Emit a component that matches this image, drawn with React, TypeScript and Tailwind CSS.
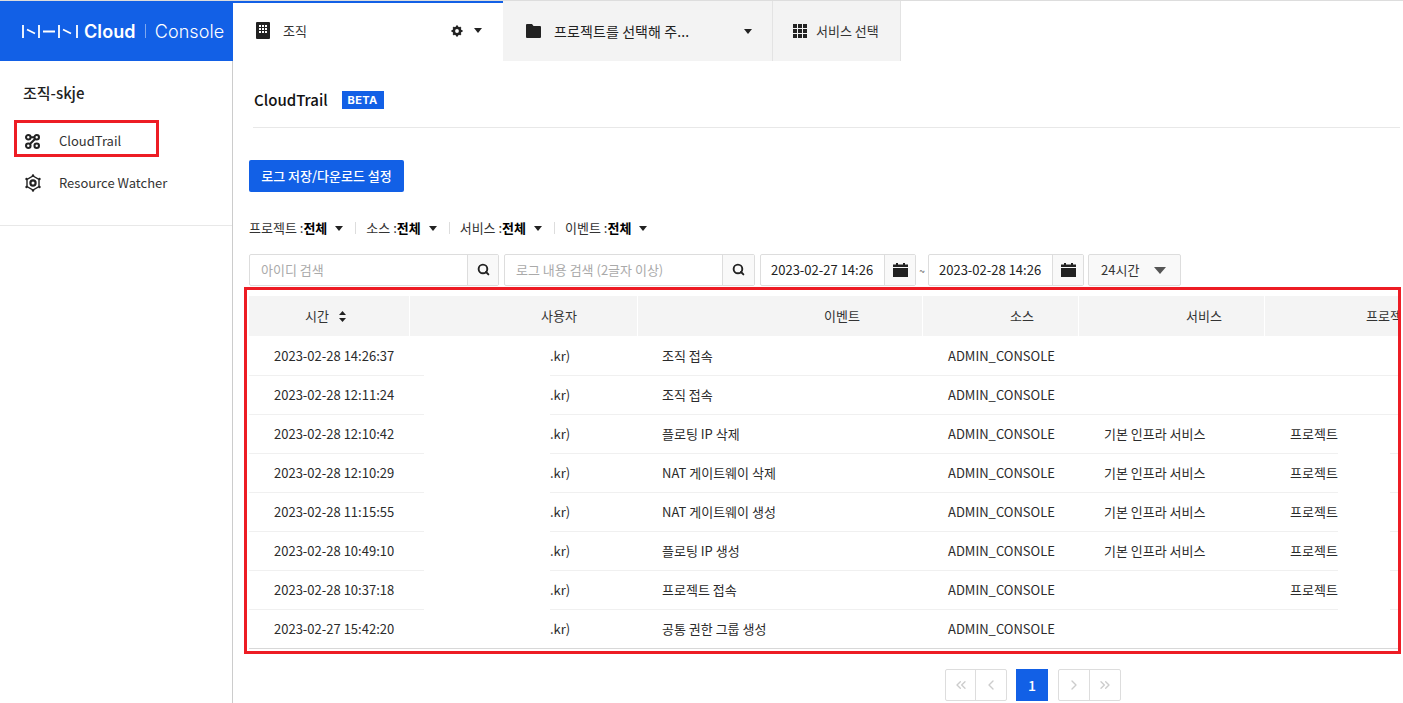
import { ChevronLeft, ChevronRight, ChevronsLeft, ChevronsRight, Search } from "lucide-react";

const FONT = "font-['Noto_Sans_CJK_KR','Noto_Sans',sans-serif]";

const rows = [
	{ time: "2023-02-28 14:26:37", event: "조직 접속", service: "", project: "" },
	{ time: "2023-02-28 12:11:24", event: "조직 접속", service: "", project: "" },
	{ time: "2023-02-28 12:10:42", event: "플로팅 IP 삭제", service: "기본 인프라 서비스", project: "프로젝트" },
	{ time: "2023-02-28 12:10:29", event: "NAT 게이트웨이 삭제", service: "기본 인프라 서비스", project: "프로젝트" },
	{ time: "2023-02-28 11:15:55", event: "NAT 게이트웨이 생성", service: "기본 인프라 서비스", project: "프로젝트" },
	{ time: "2023-02-28 10:49:10", event: "플로팅 IP 생성", service: "기본 인프라 서비스", project: "프로젝트" },
	{ time: "2023-02-28 10:37:18", event: "프로젝트 접속", service: "", project: "프로젝트" },
	{ time: "2023-02-27 15:42:20", event: "공통 권한 그룹 생성", service: "", project: "" },
];

const Caret = ({ className = "" }: { className?: string }) => (
	<span className={`inline-block w-0 h-0 border-x-[4px] border-x-transparent border-t-[5px] border-t-[#222] ${className}`} />
);

const GridIcon = ({ size = 14 }: { size?: number }) => (
	<svg width={size} height={size} viewBox="0 0 14 14" fill="#222">
		{[0, 5, 10].map((y) =>
			[0, 5, 10].map((x) => <rect key={`${x}-${y}`} x={x} y={y} width="4" height="4" />)
		)}
	</svg>
);

const OrgIcon = () => (
	<svg width="14" height="17" viewBox="0 0 14 17">
		<rect width="14" height="17" rx="1" fill="#222" />
		{[3, 6, 9].map((y) =>
			[3, 6, 9].map((x) => <rect key={`${x}-${y}`} x={x} y={y} width="2" height="2" fill="#fff" />)
		)}
	</svg>
);

const Logo = () => (
	<svg width="56" height="13" viewBox="0 0 56 13" fill="none" stroke="#fff" strokeWidth="1.8">
		<path d="M1 0v13M5 4.5l8 4M17 0v13M21 6.5h12M37 0v13M41 4.5l8 4M55 0v13" />
	</svg>
);

const TrailIcon = () => (
	<svg width="15" height="15" viewBox="0 0 16 16" fill="none" stroke="#222" strokeWidth="2.2">
		<circle cx="3.5" cy="3.5" r="2.4" />
		<circle cx="12.5" cy="3.5" r="2.4" />
		<circle cx="3.5" cy="12.5" r="2.4" />
		<circle cx="12.5" cy="12.5" r="2.4" />
		<path d="M6 3.5h4M5.5 10.5l5-5" />
	</svg>
);

const WatcherIcon = () => (
	<svg width="18" height="18" viewBox="0 0 18 18" fill="none" stroke="#222" strokeWidth="1.4">
		<path d="M9 2l6 3.5v7L9 16l-6-3.5v-7z" />
		<circle cx="9" cy="9" r="2.6" strokeWidth="2.2" />
		<circle cx="9" cy="1.5" r="1.2" fill="#222" stroke="none" />
		<circle cx="9" cy="16.5" r="1.2" fill="#222" stroke="none" />
		<circle cx="2.5" cy="5" r="1.2" fill="#222" stroke="none" />
		<circle cx="15.5" cy="5" r="1.2" fill="#222" stroke="none" />
		<circle cx="2.5" cy="13" r="1.2" fill="#222" stroke="none" />
		<circle cx="15.5" cy="13" r="1.2" fill="#222" stroke="none" />
	</svg>
);

const CalendarIcon = () => (
	<svg width="15" height="14" viewBox="0 0 15 14" fill="#222">
		<rect x="3" y="0" width="2" height="3" />
		<rect x="10" y="0" width="2" height="3" />
		<rect x="0" y="1.5" width="15" height="2.5" />
		<rect x="0" y="5" width="15" height="9" />
	</svg>
);

const SearchBox = ({ placeholder, width, button }: { placeholder: string; width: string; button: string }) => (
	<div className={`flex h-[32px] border border-[#ddd] rounded-[2px] ${width}`}>
		<div className="flex-1 pl-[11px] text-[13px] leading-[30px] text-[#aaa]">{placeholder}</div>
		<div className={`flex items-center justify-center bg-[#f9f9f9] border-l border-[#ddd] pb-[2px] ${button}`}>
			<Search size={13} strokeWidth={3.5} color="#222" />
		</div>
	</div>
);

const DateBox = ({ value }: { value: string }) => (
	<div className="flex h-[32px] w-[156px] border border-[#ddd] rounded-[2px]">
		<div className="flex-1 pl-[10px] text-[13px] leading-[30px] text-[#222]">{value}</div>
		<div className="w-[31px] flex items-center justify-center bg-[#f9f9f9] border-l border-[#ddd]">
			<CalendarIcon />
		</div>
	</div>
);

const Filter = ({ label }: { label: string }) => (
	<div className="flex items-center">
		<span className="text-[#333]">{label} :</span>
		<span className="font-bold text-black">전체</span>
		<Caret className="ml-[8px]" />
	</div>
);

const FilterDivider = () => <span className="ml-[12px] mr-[10px] w-px h-[12px] bg-[#ddd]" />;

const PageButton = ({ children, className = "w-[30px]" }: { children: React.ReactNode; className?: string }) => (
	<div className={`h-[30px] flex items-center justify-center text-[#ccc] ${className}`}>{children}</div>
);

const Header = ({ label, className = "" }: { label: string; className?: string }) => (
	<div className={`h-[40px] bg-[#f4f4f4] leading-[40px] text-[13px] text-[#333] whitespace-nowrap ${className}`}>{label}</div>
);

const App = () => {
	return (
		<div className={`relative w-[1403px] h-[703px] overflow-hidden bg-white ${FONT}`}>
			{/* top bar */}
			<div className="flex h-[61px] border-t border-[#ddd] bg-white">
				<div className="w-[233px] bg-[#1260e6] flex items-center pl-[22px] text-white">
					<Logo />
					<span className="ml-[6px] font-['Inter',sans-serif] font-semibold text-[18px] tracking-[0.1px]">Cloud</span>
					<span className="ml-[9px] w-px h-[14px] bg-[#7fa8ee]" />
					<span className="ml-[9px] font-['Inter',sans-serif] font-light text-[18px] tracking-[0.1px]">Console</span>
				</div>
				<div className="w-[270px] border-t-2 border-[#1260e6] bg-white flex items-center pl-[23px] pb-[3px] text-[13px] text-[#333]">
					<OrgIcon />
					<span className="ml-[13px] flex-1">조직</span>
					<svg width="12" height="12" viewBox="0 0 12 12" className="mr-[11px]">
						<circle cx="6" cy="6" r="3.2" fill="none" stroke="#222" strokeWidth="2.6" />
						<path d="M6 0.5v2M6 9.5v2M0.5 6h2M9.5 6h2M2.2 2.2l1.4 1.4M8.4 8.4l1.4 1.4M2.2 9.8l1.4-1.4M8.4 3.6l1.4-1.4" stroke="#222" strokeWidth="2" />
					</svg>
					<Caret className="mr-[21px]" />
				</div>
				<div className="w-[270px] bg-[#f3f3f3] border-r border-[#e3e3e3] flex items-center pl-[23px] text-[14px] text-[#222]">
					<svg width="15" height="14" viewBox="0 0 15 14" fill="#222">
						<path d="M0 1a1 1 0 0 1 1-1h5l1.5 2H14a1 1 0 0 1 1 1v10a1 1 0 0 1-1 1H1a1 1 0 0 1-1-1z" />
					</svg>
					<span className="ml-[13px] flex-1 tracking-[0.1px]">프로젝트를 선택해 주...</span>
					<Caret className="mr-[20px]" />
				</div>
				<div className="w-[128px] bg-[#f3f3f3] border-r border-[#e3e3e3] flex items-center pl-[20px] text-[13px] text-[#333]">
					<GridIcon />
					<span className="ml-[9px]">서비스 선택</span>
				</div>
			</div>

			<div className="flex h-[642px]">
				{/* sidebar */}
				<div className="w-[233px] shrink-0 border-r border-[#ccc]">
					<div className="h-[165px] border-b border-[#e8e8e8]">
						<div className="pl-[23px] pt-[20px] text-[15px] font-medium leading-[24px] text-[#222]">조직-skje</div>
						<div className="flex items-center h-[42px] mt-[15px] pl-[25px] text-[13px] text-[#333]">
							<TrailIcon />
							<span className="ml-[19px]">CloudTrail</span>
						</div>
						<div className="flex items-center h-[42px] pl-[24px] text-[13px] text-[#333]">
							<WatcherIcon />
							<span className="ml-[17px]">Resource Watcher</span>
						</div>
					</div>
				</div>

				{/* main */}
				<div className="flex-1 pl-[16px] min-w-0">
					<div className="ml-[4px] mr-[3px] h-[67px] border-b border-[#e8e8e8] flex items-center pt-[12px]">
						<span className="ml-[1px] text-[15px] font-medium text-[#111]">CloudTrail</span>
						<span className="ml-[14px] w-[42px] h-[18px] bg-[#1260e6] text-white text-[11px] font-['Inter',sans-serif] font-bold tracking-[0.4px] flex items-center justify-center">BETA</span>
					</div>
					<div className="mt-[32px] w-[155px] h-[32px] bg-[#1260e6] rounded-[2px] text-white text-[13px] font-medium flex items-center justify-center">
						로그 저장/다운로드 설정
					</div>
					<div className="mt-[26px] h-[20px] flex items-center text-[13px]">
						<Filter label="프로젝트" />
						<FilterDivider />
						<Filter label="소스" />
						<FilterDivider />
						<Filter label="서비스" />
						<FilterDivider />
						<Filter label="이벤트" />
					</div>
					<div className="mt-[16px] flex items-center">
						<SearchBox placeholder="아이디 검색" width="w-[250px]" button="w-[31px]" />
						<div className="w-[5px]" />
						<SearchBox placeholder="로그 내용 검색 (2글자 이상)" width="w-[251px]" button="w-[32px]" />
						<div className="w-[5px]" />
						<DateBox value="2023-02-27 14:26" />
						<span className="w-[12px] text-center text-[10px] text-[#555]">~</span>
						<DateBox value="2023-02-28 14:26" />
						<div className="ml-[4px] w-[93px] h-[32px] border border-[#ddd] rounded-[2px] bg-[#f9f9f9] flex items-center pl-[12px] text-[13px] text-[#333]">
							24시간
							<span className="ml-[15px] inline-block w-0 h-0 border-x-[6px] border-x-transparent border-t-[7px] border-t-[#555]" />
						</div>
					</div>

					{/* table */}
					<div className="mt-[10px] w-[1149px] overflow-hidden">
						<div className="grid grid-cols-[160px_227px_284px_155px_185px_1fr] gap-x-px -mr-[1px]">
							<div className="h-[40px] bg-[#f4f4f4] flex items-center pl-[56px] text-[13px] text-[#333]">
								시간
								<svg width="7" height="11" viewBox="0 0 7 11" fill="#222" className="ml-[10px]">
									<path d="M3.5 0L7 4H0zM3.5 11L0 7h7z" />
								</svg>
							</div>
							<Header label="사용자" className="pl-[131px]" />
							<Header label="이벤트" className="pl-[186px]" />
							<Header label="소스" className="pl-[87px]" />
							<Header label="서비스" className="pl-[107px]" />
							<Header label="프로젝트" className="pl-[101px]" />
						</div>
						<div className="pt-px text-[13px] text-[#2b2b2b]">
							{rows.map((row, i) => (
								<div key={row.time}>
									<div className="grid grid-cols-[161px_228px_285px_156px_186px_1fr] h-[38px] items-center leading-[38px]">
										<div className="pl-[25px]">{row.time}</div>
										<div className="pl-[140px]">.kr)</div>
										<div className="pl-[24px]">{row.event}</div>
										<div className="pl-[25px]">ADMIN_CONSOLE</div>
										<div className="pl-[25px]">{row.service}</div>
										<div className="pl-[25px]">{row.project}</div>
									</div>
									{i < rows.length - 1 ? (
										<div className="flex h-px">
											<div className="w-[175px] bg-[#f0f0f0]" />
											<div className="w-[126px]" />
											<div className="w-[788px] bg-[#f0f0f0]" />
											<div className={i < 2 ? "w-[52px] bg-[#f0f0f0]" : "w-[52px]"} />
											<div className="flex-1 bg-[#f0f0f0]" />
										</div>
									) : (
										<div className="h-px bg-[#d8d8d8]" />
									)}
								</div>
							))}
						</div>
					</div>

					{/* pagination */}
					<div className="mt-[20px] ml-[696px] flex">
						<div className="flex border border-[#ddd] rounded-[2px]">
							<PageButton className="w-[30px] border-r border-[#ddd]"><ChevronsLeft size={16} /></PageButton>
							<PageButton><ChevronLeft size={16} /></PageButton>
						</div>
						<div className="ml-[9px] w-[32px] h-[32px] bg-[#1260e6] text-white text-[14px] font-medium flex items-center justify-center">1</div>
						<div className="ml-[10px] flex border border-[#ddd] rounded-[2px]">
							<PageButton className="w-[31px] border-r border-[#ddd]"><ChevronRight size={16} /></PageButton>
							<PageButton><ChevronsRight size={16} /></PageButton>
						</div>
					</div>
				</div>
			</div>

			{/* red annotation boxes */}
			<div className="absolute left-[14px] top-[120px] w-[145px] h-[37px] border-[3px] border-[#ed1c24]" />
			<div className="absolute left-[244px] top-[287px] w-[1157px] h-[367px] border-[3px] border-[#ed1c24]" />
		</div>
	);
};

export default App;
